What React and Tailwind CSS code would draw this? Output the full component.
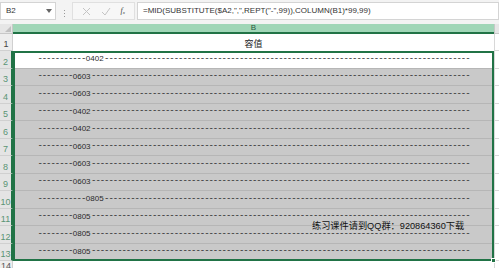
import React from "react";

const rows = [
  { pre: 11, code: "0402" },
  { pre: 8, code: "0603" },
  { pre: 8, code: "0603" },
  { pre: 8, code: "0402" },
  { pre: 8, code: "0402" },
  { pre: 8, code: "0603" },
  { pre: 8, code: "0603" },
  { pre: 8, code: "0603" },
  { pre: 11, code: "0805" },
  { pre: 8, code: "0805" },
  { pre: 8, code: "0805" },
  { pre: 8, code: "0805" },
];

const dashes = (n) => "-".repeat(n);
const mono = { fontFamily: "'Liberation Mono', monospace" };

function FormulaBar() {
  return (
    <div className="flex h-[24px] items-start bg-[#f3f3f3] pt-[2px]">
      <div className="flex h-[18px] w-[56px] items-center justify-between border border-[#d4d4d4] bg-white pl-[5px] pr-[3px] text-[8px] text-[#333]">
        <span>B2</span>
        <svg width="6" height="4" viewBox="0 0 6 4">
          <path d="M0 0 L6 0 L3 4 Z" fill="#666" />
        </svg>
      </div>
      <div className="flex w-[16px] flex-col items-center justify-center gap-[2px] self-center">
        <span className="h-[1px] w-[1px] bg-[#999]" />
        <span className="h-[1px] w-[1px] bg-[#999]" />
        <span className="h-[1px] w-[1px] bg-[#999]" />
      </div>
      <div className="flex h-[18px] w-[63px] items-center justify-around border border-[#e0e0e0] bg-[#f7f7f7] px-[4px]">
        <svg width="9" height="9" viewBox="0 0 9 9">
          <path d="M1 1 L8 8 M8 1 L1 8" stroke="#c4c4c4" strokeWidth="1" />
        </svg>
        <svg width="10" height="9" viewBox="0 0 10 9">
          <path d="M1 5 L4 8 L9 1" stroke="#c4c4c4" strokeWidth="1" fill="none" />
        </svg>
        <span className="text-[8px] italic text-[#444]" style={{ fontFamily: "'Liberation Serif', serif" }}>
          f<sub className="text-[5px]">x</sub>
        </span>
      </div>
      <div className="ml-[2px] flex h-[18px] flex-1 items-center border border-[#d4d4d4] bg-white pl-[5px] text-[8px] text-[#333]">
        =MID(SUBSTITUTE($A2,",",REPT("-",99)),COLUMN(B1)*99,99)
      </div>
    </div>
  );
}

export default function App() {
  return (
    <div
      className="relative h-[268px] w-[499px] overflow-hidden bg-white"
      style={{ fontFamily: "'Liberation Sans', 'Noto Sans CJK SC', sans-serif" }}
    >
      <FormulaBar />

      {/* column header */}
      <div className="flex h-[10px]">
        <div className="relative w-[13px] border-b border-r border-[#c8c8c8] bg-[#e6e6e6]">
          <svg className="absolute bottom-[1px] right-[1px]" width="6" height="6" viewBox="0 0 6 6">
            <path d="M6 0 L6 6 L0 6 Z" fill="#c0c0c0" />
          </svg>
        </div>
        <div className="flex w-[481px] items-center justify-center border-b-2 border-[#217346] bg-[#a0d6b7] text-[8px] leading-none text-[#2a5a3e]">
          B
        </div>
        <div className="flex-1 border-b border-l border-[#c8c8c8] bg-[#e6e6e6]" />
      </div>

      {/* row 1 */}
      <div className="flex h-[17px]">
        <div className="flex w-[13px] items-end justify-center border-b border-r border-[#d0d0d0] bg-[#eeeeee] pb-[1px] text-[9px] leading-none text-[#444]">
          1
        </div>
        <div className="flex w-[481px] items-end justify-center pb-[2px] text-[9px] leading-none text-[#222]">
          容值
        </div>
        <div className="flex-1 border-b border-l border-[#d8d8d8]" />
      </div>

      {/* rows 2-13 */}
      {rows.map((r, i) => (
        <div key={i} className="flex h-[17.5px]">
          <div className="flex w-[13px] items-end justify-center border-b border-r-2 border-b-[#d0d0d0] border-r-[#217346] bg-[#e4e4e4] pb-[1px] text-[9px] leading-none text-[#5a9475]">
            {i + 2}
          </div>
          <div
            className={`flex w-[481px] items-center justify-center border-b border-[#b6b6b6] ${i === 0 ? "bg-white" : "bg-[#c9c9c9]"}`}
          >
            <span className="flex items-center whitespace-pre leading-none text-[#2a2a2a]">
              <span className="text-[9px] tracking-[-1.05px]" style={mono}>
                {dashes(r.pre)}
              </span>
              <span className="px-[0.5px] text-[8px]">{r.code}</span>
              <span className="text-[9px] tracking-[-1.05px]" style={mono}>
                {dashes(95 - r.pre)}
              </span>
            </span>
          </div>
          <div className="flex-1 border-b border-l border-[#d8d8d8]" />
        </div>
      ))}

      {/* row 14 */}
      <div className="flex h-[10px]">
        <div className="flex w-[13px] items-start justify-center border-r border-[#d0d0d0] bg-[#eeeeee] pt-[1px] text-[9px] leading-none text-[#555]">
          14
        </div>
        <div className="w-[481px]" />
        <div className="flex-1 border-l border-[#d8d8d8]" />
      </div>

      {/* selection outline */}
      <div className="pointer-events-none absolute left-[13px] top-[51px] h-[210px] w-[481px] border-2 border-[#217346]" />
      <div className="absolute left-[491px] top-[258px] h-[5px] w-[5px] border border-white bg-[#217346]" />

      {/* overlay note */}
      <div className="absolute left-[312px] top-[222px] text-[9.2px] leading-none text-[#111]">
        练习课件请到QQ群：920864360下载
      </div>
    </div>
  );
}
